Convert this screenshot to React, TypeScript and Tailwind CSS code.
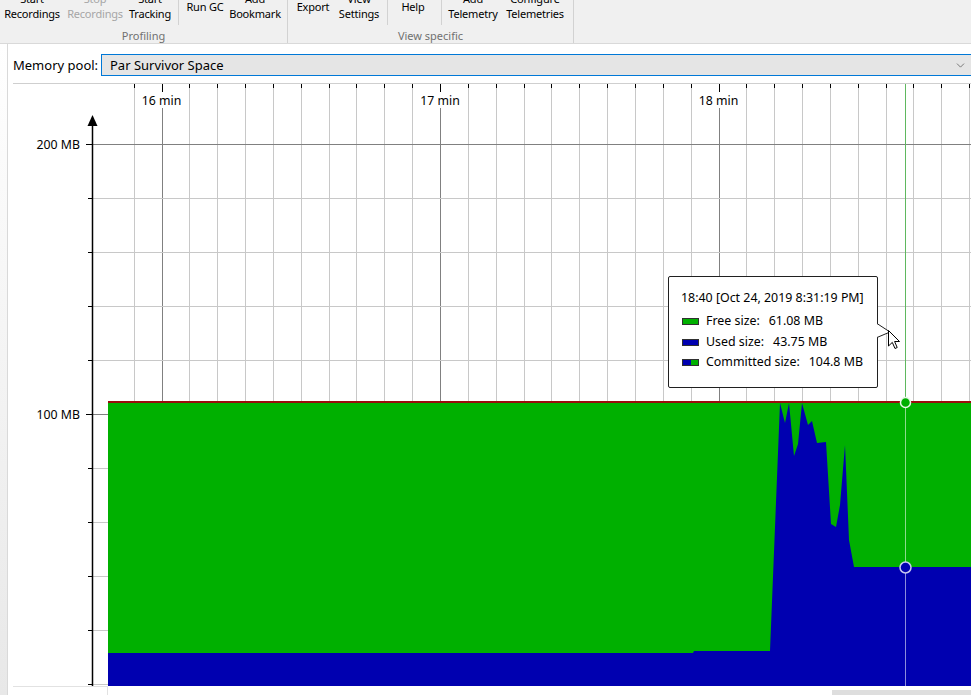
import React from "react";
import { ChevronDown } from "lucide-react";

const FONT = { fontFamily: '"Noto Sans", "Liberation Sans", sans-serif' };

function Btn({ w, lines, disabled }: { w: number; lines: string[]; disabled?: boolean }) {
  return (
    <div
      className={`flex flex-col justify-center items-center h-[30px] text-[11px] leading-[15px] whitespace-nowrap tracking-[-0.2px] ${
        disabled ? "text-[#a6a6a6]" : "text-black"
      }`}
      style={{ width: w }}
    >
      {lines.map((l, i) => (
        <span key={i}>{l}</span>
      ))}
    </div>
  );
}

function Sep() {
  return <div className="w-px h-[34px] bg-[#d2d2d2] self-start" />;
}

function Toolbar() {
  return (
    <div className="h-[44px] bg-[#f0f0f0] border-b border-[#d9d9d9] flex overflow-hidden">
      <div className="flex flex-col w-[287px]">
        <div className="flex h-[30px] mt-[-9px]">
          <Btn w={64} lines={["Start", "Recordings"]} />
          <Btn w={62} lines={["Stop", "Recordings"]} disabled />
          <Btn w={48} lines={["Start", "Tracking"]} />
          <div className="w-[4px]" />
          <Sep />
          <Btn w={52} lines={["Run GC"]} />
          <Btn w={48} lines={["Add", "Bookmark"]} />
        </div>
        <div className="mt-[7px] text-center text-[11px] leading-[15px] text-[#707070]">Profiling</div>
      </div>
      <div className="w-px h-full bg-[#d2d2d2]" />
      <div className="flex flex-col w-[285px]">
        <div className="flex h-[30px] mt-[-9px]">
          <Btn w={50} lines={["Export"]} />
          <Btn w={42} lines={["View", "Settings"]} />
          <div className="w-[7px]" />
          <Sep />
          <Btn w={50} lines={["Help"]} />
          <div className="w-[3px]" />
          <Sep />
          <Btn w={62} lines={["Add", "Telemetry"]} />
          <Btn w={62} lines={["Configure", "Telemetries"]} />
        </div>
        <div className="mt-[7px] text-center text-[11px] leading-[15px] text-[#707070]">View specific</div>
      </div>
      <div className="w-px h-full bg-[#d2d2d2]" />
    </div>
  );
}

const MINOR = 27.85;
const X0 = 161.5;
const vxs = Array.from({ length: 31 }, (_, i) => ({ k: i - 1, x: X0 + (i - 1) * MINOR }));
const hys = Array.from({ length: 11 }, (_, j) => ({ j, y: 144 + j * 54 }));

const bluePts =
  "108,686 108,653 693,653 694,651 770,651 780,403 785,423 789,403 794,456 798,444 802,403 808,425 812,421 817,443 826,442 831,524 836,527 840,505 845,445 849,540 854,567 971,567 971,686";

function Chart() {
  return (
    <div className="relative w-[958px] h-[603px] overflow-hidden">
      <svg width={958} height={603} viewBox="13 83 958 603" className="block">
        <rect x={13} y={83} width={958} height={603} fill="#ffffff" />
        <line x1={13} y1={83.5} x2={971} y2={83.5} stroke="#cfcfcf" />
        {vxs.map(({ k, x }) => {
          const major = k % 10 === 0 && k >= 0;
          const px = Math.round(x) + 0.5;
          return (
            <g key={k}>
              {major ? (
                <>
                  <line x1={px} y1={108} x2={px} y2={686} stroke="#808080" />
                  <line x1={px} y1={84} x2={px} y2={92} stroke="#000" />
                </>
              ) : (
                <>
                  <line x1={px} y1={88} x2={px} y2={686} stroke="#c8c8c8" />
                  <line x1={px} y1={84} x2={px} y2={88} stroke="#000" />
                </>
              )}
            </g>
          );
        })}
        {[
          { x: 161.5, t: "16 min" },
          { x: 440, t: "17 min" },
          { x: 718.5, t: "18 min" },
        ].map((l) => (
          <text
            key={l.t}
            x={l.x}
            y={104.5}
            textAnchor="middle"
            fontSize={12.3}
            fill="#000"
            style={FONT}
          >
            {l.t}
          </text>
        ))}
        {hys.map(({ j, y }) => {
          const major = j === 0 || j === 5;
          const py = y + 0.5;
          return (
            <g key={j}>
              <line x1={92} y1={py} x2={971} y2={py} stroke={major ? "#808080" : "#c8c8c8"} />
              <line x1={major ? 86 : 88} y1={py} x2={92} y2={py} stroke="#000" />
            </g>
          );
        })}
        <text x={80} y={148.5} textAnchor="end" fontSize={12.3} fill="#000" style={FONT}>
          200 MB
        </text>
        <text x={80} y={418.5} textAnchor="end" fontSize={12.3} fill="#000" style={FONT}>
          100 MB
        </text>
        {/* axis */}
        <line x1={92.5} y1={122} x2={92.5} y2={686} stroke="#000" strokeWidth={1.5} />
        <polygon points="92.5,115 97.5,126 87.5,126" fill="#000" />
        {/* data */}
        <rect x={108} y={402} width={863} height={284} fill="#00b000" />
        <polygon points={bluePts} fill="#0000b0" />
        <line x1={108} y1={402} x2={971} y2={402} stroke="#9a0c0c" strokeWidth={2} />
        {/* cursor line */}
        <line x1={905.5} y1={84} x2={905.5} y2={401} stroke="#5fb85f" />
        <line x1={905.5} y1={401} x2={905.5} y2={686} stroke="rgba(255,255,255,0.55)" />
        <circle cx={905.5} cy={402.5} r={5} fill="#00b000" stroke="#e8f8e8" strokeWidth={1.5} />
        <circle cx={905.5} cy={567.5} r={5.5} fill="#0000b0" stroke="#c8c8f0" strokeWidth={1.5} />
      </svg>

      {/* tooltip */}
      <div
        className="absolute left-[655px] top-[193px] w-[210px] h-[112px] bg-white border border-[#202020] rounded-[2px] text-[12.4px] text-black"
        style={FONT}
      >
        <div className="pl-[12px] pt-[12px] leading-[17px] whitespace-nowrap">18:40 [Oct 24, 2019 8:31:19 PM]</div>
        <div className="flex flex-col gap-[3.5px] mt-[7px] pl-[13px]">
          <Row swatch="free" label="Free size:" value="61.08 MB" />
          <Row swatch="used" label="Used size:" value="43.75 MB" />
          <Row swatch="comm" label="Committed size:" value="104.8 MB" />
        </div>
      </div>
      <svg className="absolute left-[863px] top-[237px]" width={16} height={22} viewBox="0 0 16 22">
        <polygon points="0,3 14,12 0,18" fill="#fff" />
        <polyline points="1,3.5 14,12 1,17.5" fill="none" stroke="#202020" strokeWidth={1} />
      </svg>
      {/* mouse pointer */}
      <svg className="absolute left-[875px] top-[247px]" width={13} height={20} viewBox="0 0 13 20">
        <path d="M0.5,0.5 L0.5,16 L4.3,12.4 L7,18.5 L9.2,17.5 L6.6,11.5 L11.5,11.5 Z" fill="#fff" stroke="#000" strokeWidth={1} />
      </svg>
    </div>
  );
}

function Row({ swatch, label, value }: { swatch: string; label: string; value: string }) {
  return (
    <div className="flex items-center h-[17px] whitespace-nowrap">
      {swatch === "comm" ? (
        <div className="flex w-[17px] h-[7px] border border-[#303030]">
          <div className="w-1/2 bg-[#0000b0]" />
          <div className="w-1/2 bg-[#00b000]" />
        </div>
      ) : (
        <div
          className={`w-[17px] h-[7px] border border-[#303030] ${swatch === "free" ? "bg-[#00b000]" : "bg-[#0000b0]"}`}
        />
      )}
      <span className="ml-[7px]">{label}</span>
      <span className="ml-[9px]">{value}</span>
    </div>
  );
}

export default function App() {
  return (
    <div className="w-[971px] h-[695px] overflow-hidden bg-white flex flex-col" style={FONT}>
      <Toolbar />
      <div className="flex flex-1 min-h-0">
        <div className="w-[8px] border-r border-[#d9d9d9] bg-gradient-to-b from-white to-[#e8e8e8]" />
        <div className="flex-1 flex flex-col pl-[5px] min-w-0">
          <div className="h-[39px] flex items-start pt-[10px]">
            <div className="w-[88px] h-[22px] flex items-center pt-[2px] text-[13px] text-black whitespace-nowrap">Memory pool:</div>
            <div className="flex-1 h-[22px] bg-[#e5e5e5] border border-r-0 border-[#0078d7] flex items-center pl-[8px] pr-[4px] text-[13px] text-black">
              <span className="flex-1 pt-[2px]">Par Survivor Space</span>
              <ChevronDown size={13} strokeWidth={1.5} color="#606060" />
            </div>
          </div>
          <Chart />
          <div className="flex h-[9px]">
            <div className="w-[95px] h-full border-t border-r border-[#e2e2e2]" />
            <div className="w-[724px]" />
            <div className="w-[139px] mt-[4px] h-[5px] bg-[#dedede]" />
          </div>
        </div>
      </div>
    </div>
  );
}
